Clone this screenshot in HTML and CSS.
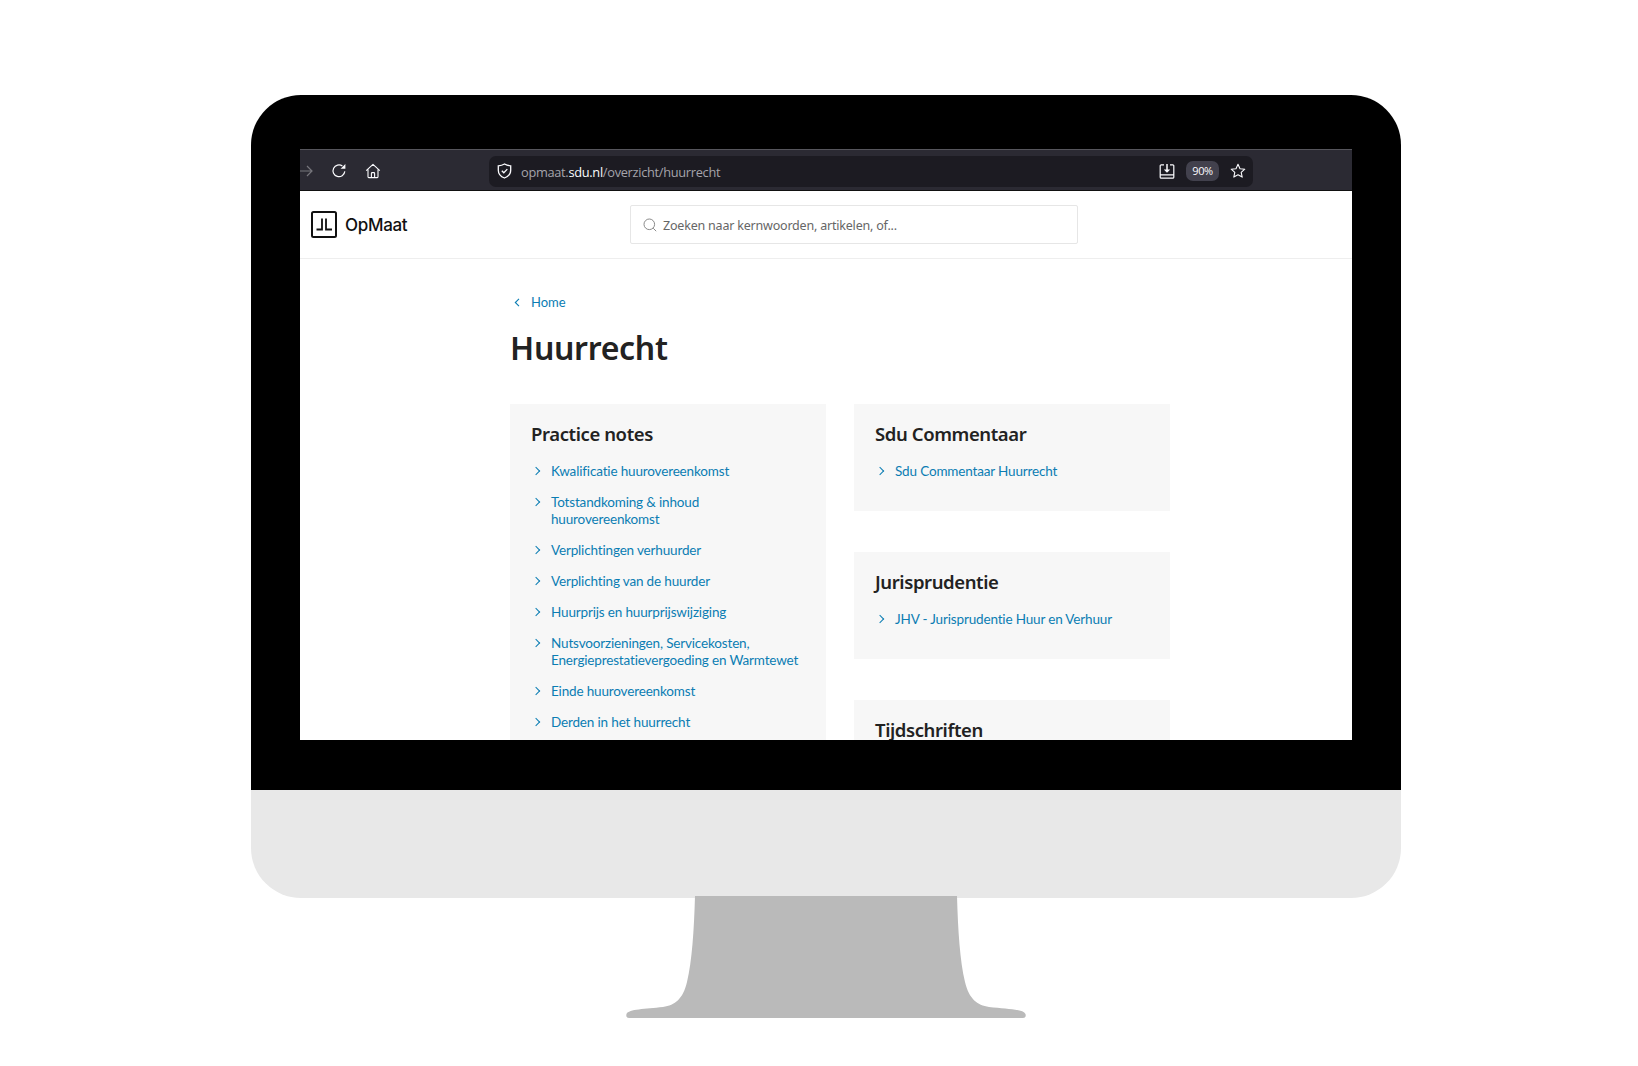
FILE: index.html
```html
<!DOCTYPE html>
<html lang="nl">
<head>
<meta charset="utf-8">
<title>Huurrecht - OpMaat</title>
<link rel="stylesheet" href="styles.css">
</head>
<body>
<div class="monitor">
  <div class="bezel">
    <div class="screen">
      <div class="toolbar">
        <svg class="tb-icon tb-back" width="13" height="14" viewBox="0 0 13 14"><path d="M0 7h12M7 2l5 5-5 5" fill="none" stroke="#77767d" stroke-width="1.2"/></svg>
        <svg class="tb-icon tb-reload" width="16" height="16" viewBox="0 0 16 16"><path d="M13.8 8.400A5.900 5.900 0 1 1 11.400 3" fill="none" stroke="#fbfbfe" stroke-width="1.200"/><path d="M14.400 1v4.800H9.600z" fill="#fbfbfe"/></svg>
        <svg class="tb-icon tb-home" width="16" height="16" viewBox="0 0 16 16"><path d="M1.200 7.600 8 1.400l6.800 6.200M3 6.400v7.400c0 .5.300.8.800.8h8.400c.5 0 .8-.3.800-.8V6.400M6.400 14.400v-4c0-.5.300-.8.800-.8h1.600c.5 0 .8.300.8.800v4" fill="none" stroke="#fbfbfe" stroke-width="1.100" stroke-linejoin="round"/></svg>
        <div class="urlbar">
          <svg class="shield" width="15" height="16" viewBox="0 0 15 16"><path d="M7.500 1C5.600 2.200 3.600 2.700 1.300 2.800v4.400c0 3.400 2.400 6.300 6.200 7.800 3.800-1.500 6.200-4.400 6.200-7.800V2.800C11.400 2.700 9.400 2.200 7.500 1z" fill="none" stroke="#fbfbfe" stroke-width="1.300"/><path d="M4.800 7.700l2 2 3.500-3.600" fill="none" stroke="#fbfbfe" stroke-width="1.300"/></svg>
          <span class="url"><span class="url-dim">opmaat.</span>sdu.nl<span class="url-dim">/overzicht/huurrecht</span></span>
          <div class="url-actions">
            <svg class="url-dl" width="16" height="15" viewBox="0 0 16 15"><path d="M5 .8H2.200c-.6 0-1 .4-1 1v11.400c0 .6.400 1 1 1h11.600c.6 0 1-.4 1-1V1.800c0-.6-.4-1-1-1H11M1.200 10.800h13.600" fill="none" stroke="#fbfbfe" stroke-width="1.200"/><path d="M8 0v6" stroke="#fbfbfe" stroke-width="1.500"/><path d="M4.800 5.400h6.400L8 8.800z" fill="#fbfbfe"/></svg>
            <span class="zoom-pill">90%</span>
            <svg class="url-star" width="16" height="16" viewBox="0 0 16 16"><path d="M8 1.300l2 4.400 4.800.5-3.600 3.200 1 4.700L8 11.700l-4.200 2.400 1-4.700L1.200 6.200 6 5.700z" fill="none" stroke="#fbfbfe" stroke-width="1.100" stroke-linejoin="round"/></svg>
          </div>
        </div>
      </div>
      <header class="site-header">
        <a class="brand">
          <svg class="brand-mark" width="26" height="27" viewBox="0 0 26 27"><rect x="1" y="1" width="24" height="25" rx="1.500" fill="#fff" stroke="#111" stroke-width="2"/><path d="M5.500 18.500h5.500V7.500M21 18.500h-6V7.500" fill="none" stroke="#111" stroke-width="1.800"/></svg>
          <span class="brand-name">OpMaat</span>
        </a>
        <div class="search">
          <svg width="14" height="14" viewBox="0 0 14 14"><circle cx="6.300" cy="6.300" r="5.300" fill="none" stroke="#8a8a8a" stroke-width="1"/><path d="M10.200 10.200l3 3" stroke="#8a8a8a" stroke-width="1"/></svg>
          <span class="search-text">Zoeken naar kernwoorden, artikelen, of...</span>
        </div>
      </header>
      <main class="content">
        <a class="crumb">
          <svg width="6" height="9" viewBox="0 0 6 9"><path d="M5 .8 1.300 4.500 5 8.200" fill="none" stroke="#0b7db3" stroke-width="1.100"/></svg>
          <span>Home</span>
        </a>
        <h1 class="page-title">Huurrecht</h1>
        <div class="columns">
          <section class="card card-tall">
            <h2 class="card-title">Practice notes</h2>
            <ul class="links">
              <li>Kwalificatie huurovereenkomst</li>
              <li>Totstandkoming &amp; inhoud<br>huurovereenkomst</li>
              <li>Verplichtingen verhuurder</li>
              <li>Verplichting van de huurder</li>
              <li>Huurprijs en huurprijswijziging</li>
              <li>Nutsvoorzieningen, Servicekosten,<br>Energieprestatievergoeding en Warmtewet</li>
              <li>Einde huurovereenkomst</li>
              <li>Derden in het huurrecht</li>
            </ul>
          </section>
          <div class="stack">
            <section class="card">
              <h2 class="card-title">Sdu Commentaar</h2>
              <ul class="links"><li>Sdu Commentaar Huurrecht</li></ul>
            </section>
            <section class="card">
              <h2 class="card-title">Jurisprudentie</h2>
              <ul class="links"><li>JHV - Jurisprudentie Huur en Verhuur</li></ul>
            </section>
            <section class="card">
              <h2 class="card-title">Tijdschriften</h2>
            </section>
          </div>
        </div>
      </main>
    </div>
  </div>
  <div class="chin"></div>
  <svg class="stand" width="400" height="122" viewBox="0 0 400 122"><path d="M69 0H331C332 35 334 65 339 86C343 103 351 109 363 111C381 113 397 113 399.500 118Q400.500 122 397 122H3Q-.5 122 .5 118C3 113 19 113 37 111C49 109 57 103 61 86C66 65 68 35 69 0Z" fill="#bababa"/></svg>
</div>
</body>
</html>
```
FILE: styles.css
```css
* { box-sizing: border-box; }
html, body { margin: 0; padding: 0; background: #fff; }
body { height: 1066px; overflow: hidden; }
.monitor {
  width: 1150px;
  margin: 95px 0 0 251px;
  display: flex;
  flex-direction: column;
  align-items: center;
}
.bezel {
  width: 100%;
  height: 695px;
  background: #000;
  border-radius: 50px 50px 0 0;
  padding: 54px 49px 50px;
}
.chin {
  width: 100%;
  height: 108px;
  background: #e8e8e8;
  border-radius: 0 0 50px 50px;
}
.stand { display: block; margin-top: -2px; }
.screen {
  height: 591px;
  background: #fff;
  overflow: hidden;
}
.toolbar {
  height: 42px;
  background: #2b2a33;
  border-top: 1px solid #56555c;
  border-bottom: 1px solid #111;
  padding-top: 2px;
  display: flex;
  align-items: center;
  color: #fbfbfe;
}
.tb-icon { flex: none; }
.tb-reload { margin-left: 18px; }
.tb-home { margin-left: 18px; }
.urlbar {
  margin-left: 108px;
  width: 764px;
  height: 31px;
  background: #1c1b22;
  border-radius: 7px;
  display: flex;
  align-items: center;
  padding: 0 7px 0 8px;
}
.shield { flex: none; }
.url {
  margin-left: 9px;
  padding-top: 1px;
  font: 12.8px "Open Sans", sans-serif;
  color: #fbfbfe;
  letter-spacing: -.3px;
}
.url-dim { color: #a5a4ab; }
.url-actions { margin-left: auto; display: flex; align-items: center; }
.zoom-pill {
  margin: 0 11px;
  width: 33px;
  height: 20px;
  background: #42414d;
  border-radius: 7px;
  color: #fbfbfe;
  font: 11px/20px "Open Sans", sans-serif;
  letter-spacing: -.4px;
  text-align: center;
}
.site-header {
  height: 68px;
  border-bottom: 1px solid #eeeeee;
  display: flex;
  align-items: center;
  padding-left: 11px;
}
.brand { display: flex; align-items: center; gap: 8px; width: 319px; }
.brand-mark { flex: none; }
.brand-name { font: 500 17px "Inter", sans-serif; color: #111; letter-spacing: -.3px; }
.search {
  width: 448px;
  height: 39px;
  border: 1px solid #e6e6e6;
  border-radius: 2px;
  display: flex;
  align-items: center;
  gap: 6px;
  padding-left: 12px;
}
.search-text { padding-top: 1px; font: 12.5px "Noto Sans", sans-serif; color: #666; letter-spacing: -.2px; }
.content { padding: 33px 0 0 210px; font-family: "Lato", sans-serif; }
.crumb { display: flex; align-items: center; gap: 11px; padding-left: 4px; color: #0b7db3; font-size: 13px; line-height: 20px; }
.page-title { margin: 16px 0 0; font: 600 32px/40px "Noto Sans", sans-serif; color: #222; letter-spacing: -.3px; }
.columns { margin-top: 36px; display: flex; gap: 28px; align-items: flex-start; }
.card { width: 316px; height: 107px; background: #f7f7f7; padding: 18px 21px 0; flex: none; }
.card-tall { height: 400px; }
.stack { display: flex; flex-direction: column; gap: 41px; }
.card-title { margin: 0; font: 600 18.5px/24px "Noto Sans", sans-serif; color: #222; letter-spacing: -.4px; }
.links { list-style: none; margin: 17px 0 0; padding: 0 0 0 20px; }
.links li {
  position: relative;
  font: 13.5px/17px "Lato", sans-serif;
  letter-spacing: -.16px;
  color: #0b7db3;
  margin-bottom: 14px;
}
.links li::before {
  content: "";
  position: absolute;
  left: -18px;
  top: 5px;
  width: 5px;
  height: 5px;
  border-top: 1.100px solid #0b7db3;
  border-right: 1.100px solid #0b7db3;
  transform: rotate(45deg);
}
```
